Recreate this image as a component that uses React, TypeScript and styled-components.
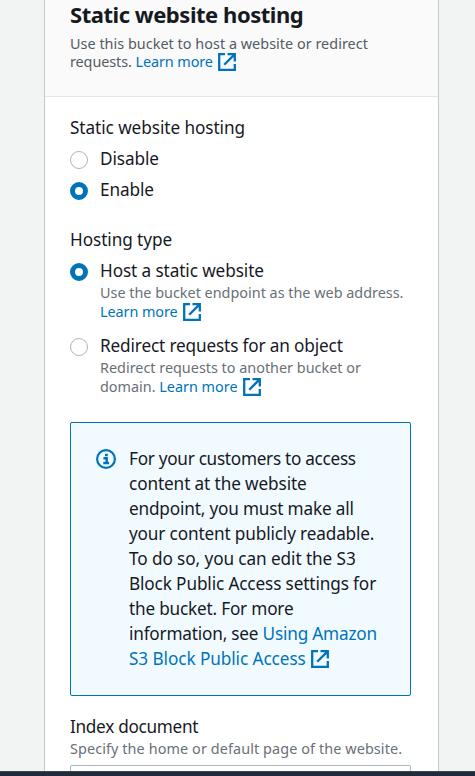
import React from "react";
import styled, { createGlobalStyle } from "styled-components";

const Global = createGlobalStyle`
  *{box-sizing:border-box}
  html,body{margin:0;background:#f2f3f3;overflow:hidden}
  body{font-family:"Noto Sans",sans-serif;color:#16191f}
`;
const Page = styled.div`
  height:776px;overflow:hidden;display:flex;flex-direction:column;
`;
const Viewport = styled.main`
  height:771px;flex:none;overflow:hidden;padding:0 36px 0 44px;
`;
const Taskbar = styled.footer`height:5px;flex:none;background:#1f2b3c;border-top:1px solid #3a4652;`;
const Panel = styled.section`
  height:100%;background:#fff;border:solid #c3c8c8;border-width:0 1px;
`;
const Header = styled.header`
  height:97px;background:#fafafa;border-bottom:1px solid #e1e6e6;padding:0 25px;
`;
const Title = styled.h2`
  margin:0;font-size:22px;line-height:28px;font-weight:700;letter-spacing:-.46px;white-space:nowrap;
`;
const Hint = styled.div<{ $dark?: boolean }>`
  font-size:14.4px;line-height:${p => (p.$dark ? 18 : 19)}px;color:${p => (p.$dark ? "#545b64" : "#687078")};white-space:nowrap;
`;
const Intro = styled.div`margin-top:7px;`;
const Line = styled.span<{ $track?: number }>`display:block;letter-spacing:${p => p.$track ?? 0}px;`;
const Link = styled.a`color:#0073bb;text-decoration:none;`;
const Icon = styled.svg<{ $lift?: boolean }>`
  width:18px;height:18px;vertical-align:${p => (p.$lift ? -3 : -4)}px;margin-left:5px;
`;
const Body = styled.div`padding:0 25px;`;
const Label = styled.div<{ $top: number; $track?: number }>`
  margin-top:${p => p.$top}px;font-size:17.2px;line-height:25px;white-space:nowrap;
  letter-spacing:${p => p.$track ?? -0.07}px;
`;
const Option = styled.div<{ $top: number }>`display:flex;gap:12px;margin-top:${p => p.$top}px;`;
const Radio = styled.span<{ $on?: boolean }>`
  width:18px;height:18px;flex:none;margin-top:5px;border-radius:50%;background:#fff;
  border:${p => (p.$on ? "5px solid #0073bb" : "1px solid #aab7b8")};
`;
const OptionLabel = styled.div<{ $track?: number }>`
  font-size:17.2px;line-height:25px;white-space:nowrap;letter-spacing:${p => p.$track ?? -0.1}px;
`;
const Notice = styled.div`
  margin-top:26px;height:274px;width:341px;border:1px solid #0073bb;border-radius:2px;background:#f1faff;
  display:flex;padding:23px 0 0 25px;gap:12px;
`;
const InfoSvg = styled.svg`width:20px;height:20px;flex:none;margin:3px 1px 0 0;`;
const NoticeText = styled.div`font-size:17.2px;line-height:25px;white-space:nowrap;`;
const Field = styled.div`margin-top:7px;height:30px;width:341px;border:1px solid #aab7b8;border-radius:2px;`;

const External = ({ lift }: { lift?: boolean }) => (
  <Icon $lift={lift} viewBox="0 0 18 18" fill="none" stroke="#0073bb" strokeWidth="2.3">
    <path d="M7 1.2H1.2v15.6h15.6V11M9.5 1.2h7.3V8.5M16.6 1.4L6.2 11.8" />
  </Icon>
);

export default function App() {
  return (
    <Page>
      <Global />
      <Viewport>
        <Panel>
          <Header>
            <Title>Static website hosting</Title>
            <Intro>
              <Hint $dark>
                <Line $track={0.03}>Use this bucket to host a website or redirect</Line>
                <Line $track={-0.08}>requests. <Link>Learn more<External /></Link></Line>
              </Hint>
            </Intro>
          </Header>
          <Body>
            <Label $top={18}>Static website hosting</Label>
            <Option $top={6}><Radio /><OptionLabel>Disable</OptionLabel></Option>
            <Option $top={6}><Radio $on /><OptionLabel>Enable</OptionLabel></Option>
            <Label $top={25}>Hosting type</Label>
            <Option $top={6}>
              <Radio $on />
              <div>
                <OptionLabel>Host a static website</OptionLabel>
                <Hint>
                  <Line>Use the bucket endpoint as the web address.</Line>
                  <Line $track={-0.06}><Link>Learn more<External /></Link></Line>
                </Hint>
              </div>
            </Option>
            <Option $top={12}>
              <Radio />
              <div>
                <OptionLabel $track={-0.15}>Redirect requests for an object</OptionLabel>
                <Hint>
                  <Line>Redirect requests to another bucket or</Line>
                  <Line>domain. <Link>Learn more<External /></Link></Line>
                </Hint>
              </div>
            </Option>
            <Notice>
              <InfoSvg viewBox="0 0 20 20" fill="none" stroke="#0073bb" strokeWidth="2.2">
                <circle cx="10" cy="10" r="8.9" />
                <path d="M9 6h2.8M7.4 9.2h3.3V14M7.3 14h5.8" strokeWidth="2.4" />
              </InfoSvg>
              <NoticeText>
                <Line $track={-0.29}>For your customers to access</Line>
                <Line $track={-0.11}>content at the website</Line>
                <Line $track={-0.18}>endpoint, you must make all</Line>
                <Line $track={-0.15}>your content publicly readable.</Line>
                <Line $track={-0.09}>To do so, you can edit the S3</Line>
                <Line $track={-0.13}>Block Public Access settings for</Line>
                <Line $track={-0.2}>the bucket. For more</Line>
                <Line $track={-0.2}>information, see <Link>Using Amazon</Link></Line>
                <Line $track={-0.08}><Link>S3 Block Public Access<External lift /></Link></Line>
              </NoticeText>
            </Notice>
            <Label $top={18} $track={-0.3}>Index document</Label>
            <Hint><Line $track={0.1}>Specify the home or default page of the website.</Line></Hint>
            <Field />
          </Body>
        </Panel>
      </Viewport>
      <Taskbar />
    </Page>
  );
}
